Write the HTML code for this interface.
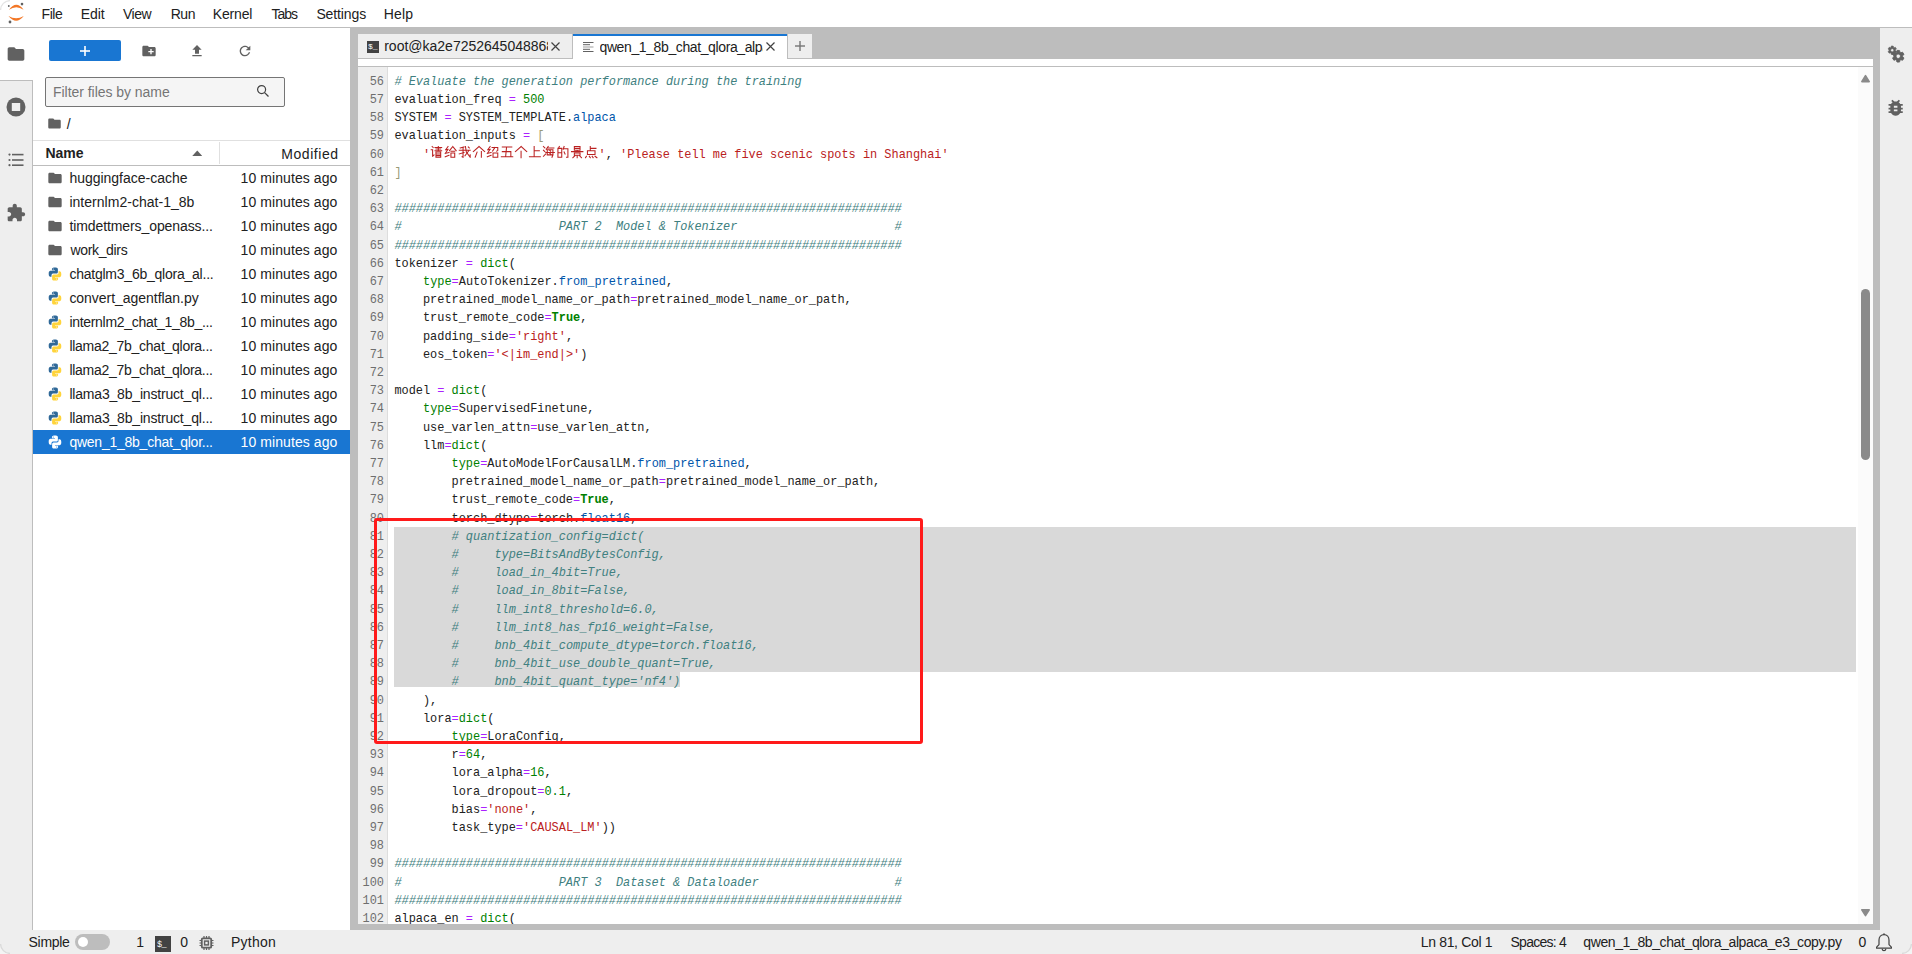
<!DOCTYPE html><html><head><meta charset="utf-8"><title>JupyterLab</title><style>

html,body{margin:0;padding:0;width:1912px;height:954px;overflow:hidden;background:#fff;font-family:"Liberation Sans",sans-serif;}
.abs{position:absolute;}
.code{position:absolute;left:394.400px;font-family:"Liberation Mono",monospace;font-size:11.9232px;line-height:18.20px;height:18.20px;white-space:pre;color:#212121;}
.gut{position:absolute;right:1489px;font-family:"Liberation Mono",monospace;font-size:11.9232px;line-height:18.20px;color:#6e6e6e;text-align:right;white-space:pre;}
.c{color:#408080;font-style:italic}
.k{color:#008000;font-weight:bold}
.b{color:#008000}
.o{color:#aa22ff}
.n{color:#008000}
.s{color:#ba2121}
.p{color:#0055aa}
.br{color:#999977}

</style></head><body>
<div class="abs" style="left:0;top:0;width:1912px;height:27px;background:#fff;border-bottom:1px solid #bdbdbd"></div>
<svg style="position:absolute;left:0.00px;top:0.00px;" width="32.00" height="27.00" viewBox="0 0 32 27"><path d="M9 9.8 Q16.3 -0.4 23.6 9.8 Q16.3 4.6 9 9.8Z" fill="#f37726"/><path d="M8.5 16 Q16.1 25.6 23.8 16 Q16.1 20.6 8.5 16Z" fill="#f37726"/><circle cx="22" cy="4.1" r="1.3" fill="#616161"/><circle cx="8.8" cy="6" r="0.9" fill="#616161"/><circle cx="10" cy="22" r="1.4" fill="#616161"/></svg>
<div style="position:absolute;left:41.60px;top:5.85px;font-size:14.00px;line-height:16.80px;color:#212121;font-weight:normal;white-space:nowrap;letter-spacing:-0.457px;">File</div>
<div style="position:absolute;left:80.80px;top:5.85px;font-size:14.00px;line-height:16.80px;color:#212121;font-weight:normal;white-space:nowrap;letter-spacing:-0.078px;">Edit</div>
<div style="position:absolute;left:123.10px;top:5.85px;font-size:14.00px;line-height:16.80px;color:#212121;font-weight:normal;white-space:nowrap;letter-spacing:-0.560px;">View</div>
<div style="position:absolute;left:170.70px;top:5.85px;font-size:14.00px;line-height:16.80px;color:#212121;font-weight:normal;white-space:nowrap;letter-spacing:-0.448px;">Run</div>
<div style="position:absolute;left:212.80px;top:5.85px;font-size:14.00px;line-height:16.80px;color:#212121;font-weight:normal;white-space:nowrap;letter-spacing:-0.172px;">Kernel</div>
<div style="position:absolute;left:271.60px;top:5.85px;font-size:14.00px;line-height:16.80px;color:#212121;font-weight:normal;white-space:nowrap;letter-spacing:-1.057px;">Tabs</div>
<div style="position:absolute;left:316.40px;top:5.85px;font-size:14.00px;line-height:16.80px;color:#212121;font-weight:normal;white-space:nowrap;letter-spacing:-0.112px;">Settings</div>
<div style="position:absolute;left:383.70px;top:5.85px;font-size:14.00px;line-height:16.80px;color:#212121;font-weight:normal;white-space:nowrap;letter-spacing:0.164px;">Help</div>
<div class="abs" style="left:0;top:28px;width:32px;height:902px;background:#eeeeee;border-right:1px solid #bdbdbd"></div>
<div class="abs" style="left:0;top:28px;width:33px;height:52px;background:#fff;border-bottom:1px solid #bdbdbd"></div>
<svg style="position:absolute;left:5.50px;top:43.50px;" width="20.00" height="20.00" viewBox="0 0 24 24"><path fill="#616161" d="M10 4H4c-1.1 0-1.99.9-1.99 2L2 18c0 1.1.9 2 2 2h16c1.1 0 2-.9 2-2V8c0-1.1-.9-2-2-2h-8l-2-2z"/></svg>
<svg style="position:absolute;left:6.00px;top:97.00px;" width="20.00" height="20.00" viewBox="0 0 20 20"><circle cx="10" cy="10" r="9.5" fill="#616161"/><rect x="5.8" y="6" width="8.4" height="8" fill="#eeeeee"/></svg>
<svg style="position:absolute;left:8.00px;top:152.00px;" width="16.00" height="16.00" viewBox="0 0 16 16"><circle cx="1.5" cy="2.6" r="1.1" fill="#616161"/><circle cx="1.5" cy="8" r="1.1" fill="#616161"/><circle cx="1.5" cy="13.2" r="1.1" fill="#616161"/><rect x="4" y="1.8" width="11.5" height="1.6" fill="#616161"/><rect x="4" y="7.2" width="11.5" height="1.6" fill="#616161"/><rect x="4" y="12.4" width="11.5" height="1.6" fill="#616161"/></svg>
<svg style="position:absolute;left:6.00px;top:202.50px;" width="20.00" height="20.00" viewBox="0 0 24 24"><path fill="#616161" d="M20.5 11H19V7c0-1.1-.9-2-2-2h-4V3.5C13 2.12 11.88 1 10.5 1S8 2.12 8 3.5V5H4c-1.1 0-1.99.9-1.99 2v3.8H3.5c1.49 0 2.7 1.210 2.7 2.7s-1.21 2.7-2.7 2.7H2V20c0 1.1.9 2 2 2h3.8v-1.5c0-1.49 1.21-2.7 2.7-2.7 1.49 0 2.7 1.21 2.7 2.7V22H17c1.1 0 2-.9 2-2v-4h1.5c1.38 0 2.5-1.12 2.5-2.5S21.88 11 20.5 11z"/></svg>
<div class="abs" style="left:33px;top:28px;width:317px;height:902px;background:#fff"></div>
<div class="abs" style="left:49px;top:40px;width:72px;height:21px;background:#1976d2;border-radius:2px"></div>
<svg style="position:absolute;left:79.00px;top:44.50px;" width="12.00" height="12.00" viewBox="0 0 12 12"><rect x="5.2" y="1" width="1.6" height="10" fill="#fff"/><rect x="1" y="5.2" width="10" height="1.6" fill="#fff"/></svg>
<svg style="position:absolute;left:141.00px;top:42.50px;" width="16.00" height="16.00" viewBox="0 0 24 24"><path fill="#616161" d="M20 6h-8l-2-2H4c-1.11 0-1.99.89-1.99 2L2 18c0 1.11.89 2 2 2h16c1.11 0 2-.89 2-2V8c0-1.11-.89-2-2-2zm-1 8h-3v3h-2v-3h-3v-2h3V9h2v3h3v2z"/></svg>
<svg style="position:absolute;left:189.00px;top:43.00px;" width="16.00" height="16.00" viewBox="0 0 24 24"><path fill="#616161" d="M9 16h6v-6h4l-7-7-7 7h4zm-4 2h14v2H5z"/></svg>
<svg style="position:absolute;left:237.00px;top:43.00px;" width="16.00" height="16.00" viewBox="0 0 24 24"><path fill="#616161" d="M17.65 6.35C16.2 4.9 14.21 4 12 4c-4.42 0-7.99 3.58-7.99 8s3.57 8 7.99 8c3.73 0 6.84-2.55 7.73-6h-2.08c-.82 2.33-3.04 4-5.65 4-3.31 0-6-2.69-6-6s2.69-6 6-6c1.66 0 3.14.69 4.22 1.78L13 11h7V4l-2.35 2.35z"/></svg>
<div class="abs" style="left:45px;top:77px;width:238px;height:28px;background:#f5f5f5;border:1px solid #757575;border-radius:2px"></div>
<div style="position:absolute;left:53.00px;top:84.05px;font-size:14.00px;line-height:16.80px;color:#757575;font-weight:normal;white-space:nowrap;letter-spacing:-0.037px;">Filter files by name</div>
<svg style="position:absolute;left:256.00px;top:84.00px;" width="14.00" height="14.00" viewBox="0 0 14 14"><circle cx="5.6" cy="5.6" r="4" stroke="#424242" stroke-width="1.2" fill="none"/><path d="M8.6 8.6 L12.5 12.5" stroke="#424242" stroke-width="1.3"/></svg>
<svg style="position:absolute;left:47.00px;top:116.00px;" width="15.00" height="15.00" viewBox="0 0 24 24"><path fill="#616161" d="M10 4H4c-1.1 0-1.99.9-1.99 2L2 18c0 1.1.9 2 2 2h16c1.1 0 2-.9 2-2V8c0-1.1-.9-2-2-2h-8l-2-2z"/></svg>
<div style="position:absolute;left:66.80px;top:116.05px;font-size:14.00px;line-height:16.80px;color:#212121;font-weight:normal;white-space:nowrap;letter-spacing:0.000px;">/</div>
<div class="abs" style="left:33px;top:140px;width:317px;height:24px;background:#fff;border-top:1px solid #e0e0e0;border-bottom:1px solid #bdbdbd"></div>
<div class="abs" style="left:219px;top:142px;width:1px;height:22px;background:#e0e0e0"></div>
<div style="position:absolute;left:45.50px;top:145.35px;font-size:14.00px;line-height:16.80px;color:#212121;font-weight:bold;white-space:nowrap;letter-spacing:-0.015px;">Name</div>
<svg style="position:absolute;left:191.50px;top:150.00px;" width="10.50" height="6.00" viewBox="0 0 10 6"><path d="M0 6 L5 0.5 L10 6Z" fill="#616161"/></svg>
<div style="position:absolute;left:281.30px;top:145.95px;font-size:14.00px;line-height:16.80px;color:#212121;font-weight:normal;white-space:nowrap;letter-spacing:0.553px;">Modified</div>
<svg style="position:absolute;left:47.00px;top:169.80px;" width="16.00" height="16.00" viewBox="0 0 24 24"><path fill="#616161" d="M10 4H4c-1.1 0-1.99.9-1.99 2L2 18c0 1.1.9 2 2 2h16c1.1 0 2-.9 2-2V8c0-1.1-.9-2-2-2h-8l-2-2z"/></svg>
<div style="position:absolute;left:69.40px;top:170.15px;font-size:14.00px;line-height:16.80px;color:#212121;font-weight:normal;white-space:nowrap;letter-spacing:-0.014px;">huggingface-cache</div>
<div style="position:absolute;left:240.50px;top:170.15px;font-size:14.00px;line-height:16.80px;color:#212121;font-weight:normal;white-space:nowrap;letter-spacing:0.089px;">10 minutes ago</div>
<svg style="position:absolute;left:47.00px;top:193.80px;" width="16.00" height="16.00" viewBox="0 0 24 24"><path fill="#616161" d="M10 4H4c-1.1 0-1.99.9-1.99 2L2 18c0 1.1.9 2 2 2h16c1.1 0 2-.9 2-2V8c0-1.1-.9-2-2-2h-8l-2-2z"/></svg>
<div style="position:absolute;left:69.40px;top:194.15px;font-size:14.00px;line-height:16.80px;color:#212121;font-weight:normal;white-space:nowrap;letter-spacing:0.026px;">internlm2-chat-1_8b</div>
<div style="position:absolute;left:240.50px;top:194.15px;font-size:14.00px;line-height:16.80px;color:#212121;font-weight:normal;white-space:nowrap;letter-spacing:0.089px;">10 minutes ago</div>
<svg style="position:absolute;left:47.00px;top:217.80px;" width="16.00" height="16.00" viewBox="0 0 24 24"><path fill="#616161" d="M10 4H4c-1.1 0-1.99.9-1.99 2L2 18c0 1.1.9 2 2 2h16c1.1 0 2-.9 2-2V8c0-1.1-.9-2-2-2h-8l-2-2z"/></svg>
<div style="position:absolute;left:69.40px;top:218.15px;font-size:14.00px;line-height:16.80px;color:#212121;font-weight:normal;white-space:nowrap;letter-spacing:-0.091px;">timdettmers_openass...</div>
<div style="position:absolute;left:240.50px;top:218.15px;font-size:14.00px;line-height:16.80px;color:#212121;font-weight:normal;white-space:nowrap;letter-spacing:0.089px;">10 minutes ago</div>
<svg style="position:absolute;left:47.00px;top:241.80px;" width="16.00" height="16.00" viewBox="0 0 24 24"><path fill="#616161" d="M10 4H4c-1.1 0-1.99.9-1.99 2L2 18c0 1.1.9 2 2 2h16c1.1 0 2-.9 2-2V8c0-1.1-.9-2-2-2h-8l-2-2z"/></svg>
<div style="position:absolute;left:70.40px;top:242.15px;font-size:14.00px;line-height:16.80px;color:#212121;font-weight:normal;white-space:nowrap;letter-spacing:-0.325px;">work_dirs</div>
<div style="position:absolute;left:240.50px;top:242.15px;font-size:14.00px;line-height:16.80px;color:#212121;font-weight:normal;white-space:nowrap;letter-spacing:0.089px;">10 minutes ago</div>
<svg style="position:absolute;left:48.00px;top:267.00px;" width="14.00" height="14.00" viewBox="0 0 16 16"><path fill="#306998" d="M7.9 0.5c-3.6 0-3.4 1.6-3.4 1.6v1.7h3.5v0.5H3.1S0.8 4 0.8 7.7s2 3.5 2 3.5h1.2V9.5s-0.1-2 2-2h3.4s1.9 0 1.9-1.9V2.4S11.6 0.5 7.9 0.5zM6 1.6c0.35 0 0.63 0.28 0.63 0.63S6.35 2.86 6 2.86 5.37 2.58 5.37 2.23 5.65 1.6 6 1.6z"/><path fill="#ffd43b" d="M8.1 15.5c3.6 0 3.4-1.6 3.4-1.6v-1.7H8v-0.5h4.9s2.3 0.3 2.3-3.4-2-3.5-2-3.5h-1.2v1.7s0.1 2-2 2H6.6s-1.9 0-1.9 1.9v3.2S4.4 15.5 8.1 15.5zM10 14.4c-0.35 0-0.63-0.28-0.63-0.63s0.28-0.63 0.63-0.63 0.63 0.28 0.63 0.63-0.28 0.63-0.63 0.63z"/></svg>
<div style="position:absolute;left:69.40px;top:266.15px;font-size:14.00px;line-height:16.80px;color:#212121;font-weight:normal;white-space:nowrap;letter-spacing:-0.234px;">chatglm3_6b_qlora_al...</div>
<div style="position:absolute;left:240.50px;top:266.15px;font-size:14.00px;line-height:16.80px;color:#212121;font-weight:normal;white-space:nowrap;letter-spacing:0.089px;">10 minutes ago</div>
<svg style="position:absolute;left:48.00px;top:291.00px;" width="14.00" height="14.00" viewBox="0 0 16 16"><path fill="#306998" d="M7.9 0.5c-3.6 0-3.4 1.6-3.4 1.6v1.7h3.5v0.5H3.1S0.8 4 0.8 7.7s2 3.5 2 3.5h1.2V9.5s-0.1-2 2-2h3.4s1.9 0 1.9-1.9V2.4S11.6 0.5 7.9 0.5zM6 1.6c0.35 0 0.63 0.28 0.63 0.63S6.35 2.86 6 2.86 5.37 2.58 5.37 2.23 5.65 1.6 6 1.6z"/><path fill="#ffd43b" d="M8.1 15.5c3.6 0 3.4-1.6 3.4-1.6v-1.7H8v-0.5h4.9s2.3 0.3 2.3-3.4-2-3.5-2-3.5h-1.2v1.7s0.1 2-2 2H6.6s-1.9 0-1.9 1.9v3.2S4.4 15.5 8.1 15.5zM10 14.4c-0.35 0-0.63-0.28-0.63-0.63s0.28-0.63 0.63-0.63 0.63 0.28 0.63 0.63-0.28 0.63-0.63 0.63z"/></svg>
<div style="position:absolute;left:69.40px;top:290.15px;font-size:14.00px;line-height:16.80px;color:#212121;font-weight:normal;white-space:nowrap;letter-spacing:-0.036px;">convert_agentflan.py</div>
<div style="position:absolute;left:240.50px;top:290.15px;font-size:14.00px;line-height:16.80px;color:#212121;font-weight:normal;white-space:nowrap;letter-spacing:0.089px;">10 minutes ago</div>
<svg style="position:absolute;left:48.00px;top:315.00px;" width="14.00" height="14.00" viewBox="0 0 16 16"><path fill="#306998" d="M7.9 0.5c-3.6 0-3.4 1.6-3.4 1.6v1.7h3.5v0.5H3.1S0.8 4 0.8 7.7s2 3.5 2 3.5h1.2V9.5s-0.1-2 2-2h3.4s1.9 0 1.9-1.9V2.4S11.6 0.5 7.9 0.5zM6 1.6c0.35 0 0.63 0.28 0.63 0.63S6.35 2.86 6 2.86 5.37 2.58 5.37 2.23 5.65 1.6 6 1.6z"/><path fill="#ffd43b" d="M8.1 15.5c3.6 0 3.4-1.6 3.4-1.6v-1.7H8v-0.5h4.9s2.3 0.3 2.3-3.4-2-3.5-2-3.5h-1.2v1.7s0.1 2-2 2H6.6s-1.9 0-1.9 1.9v3.2S4.4 15.5 8.1 15.5zM10 14.4c-0.35 0-0.63-0.28-0.63-0.63s0.28-0.63 0.63-0.63 0.63 0.28 0.63 0.63-0.28 0.63-0.63 0.63z"/></svg>
<div style="position:absolute;left:69.40px;top:314.15px;font-size:14.00px;line-height:16.80px;color:#212121;font-weight:normal;white-space:nowrap;letter-spacing:-0.301px;">internlm2_chat_1_8b_...</div>
<div style="position:absolute;left:240.50px;top:314.15px;font-size:14.00px;line-height:16.80px;color:#212121;font-weight:normal;white-space:nowrap;letter-spacing:0.089px;">10 minutes ago</div>
<svg style="position:absolute;left:48.00px;top:339.00px;" width="14.00" height="14.00" viewBox="0 0 16 16"><path fill="#306998" d="M7.9 0.5c-3.6 0-3.4 1.6-3.4 1.6v1.7h3.5v0.5H3.1S0.8 4 0.8 7.7s2 3.5 2 3.5h1.2V9.5s-0.1-2 2-2h3.4s1.9 0 1.9-1.9V2.4S11.6 0.5 7.9 0.5zM6 1.6c0.35 0 0.63 0.28 0.63 0.63S6.35 2.86 6 2.86 5.37 2.58 5.37 2.23 5.65 1.6 6 1.6z"/><path fill="#ffd43b" d="M8.1 15.5c3.6 0 3.4-1.6 3.4-1.6v-1.7H8v-0.5h4.9s2.3 0.3 2.3-3.4-2-3.5-2-3.5h-1.2v1.7s0.1 2-2 2H6.6s-1.9 0-1.9 1.9v3.2S4.4 15.5 8.1 15.5zM10 14.4c-0.35 0-0.63-0.28-0.63-0.63s0.28-0.63 0.63-0.63 0.63 0.28 0.63 0.63-0.28 0.63-0.63 0.63z"/></svg>
<div style="position:absolute;left:69.40px;top:338.15px;font-size:14.00px;line-height:16.80px;color:#212121;font-weight:normal;white-space:nowrap;letter-spacing:-0.266px;">llama2_7b_chat_qlora...</div>
<div style="position:absolute;left:240.50px;top:338.15px;font-size:14.00px;line-height:16.80px;color:#212121;font-weight:normal;white-space:nowrap;letter-spacing:0.089px;">10 minutes ago</div>
<svg style="position:absolute;left:48.00px;top:363.00px;" width="14.00" height="14.00" viewBox="0 0 16 16"><path fill="#306998" d="M7.9 0.5c-3.6 0-3.4 1.6-3.4 1.6v1.7h3.5v0.5H3.1S0.8 4 0.8 7.7s2 3.5 2 3.5h1.2V9.5s-0.1-2 2-2h3.4s1.9 0 1.9-1.9V2.4S11.6 0.5 7.9 0.5zM6 1.6c0.35 0 0.63 0.28 0.63 0.63S6.35 2.86 6 2.86 5.37 2.58 5.37 2.23 5.65 1.6 6 1.6z"/><path fill="#ffd43b" d="M8.1 15.5c3.6 0 3.4-1.6 3.4-1.6v-1.7H8v-0.5h4.9s2.3 0.3 2.3-3.4-2-3.5-2-3.5h-1.2v1.7s0.1 2-2 2H6.6s-1.9 0-1.9 1.9v3.2S4.4 15.5 8.1 15.5zM10 14.4c-0.35 0-0.63-0.28-0.63-0.63s0.28-0.63 0.63-0.63 0.63 0.28 0.63 0.63-0.28 0.63-0.63 0.63z"/></svg>
<div style="position:absolute;left:69.40px;top:362.15px;font-size:14.00px;line-height:16.80px;color:#212121;font-weight:normal;white-space:nowrap;letter-spacing:-0.266px;">llama2_7b_chat_qlora...</div>
<div style="position:absolute;left:240.50px;top:362.15px;font-size:14.00px;line-height:16.80px;color:#212121;font-weight:normal;white-space:nowrap;letter-spacing:0.089px;">10 minutes ago</div>
<svg style="position:absolute;left:48.00px;top:387.00px;" width="14.00" height="14.00" viewBox="0 0 16 16"><path fill="#306998" d="M7.9 0.5c-3.6 0-3.4 1.6-3.4 1.6v1.7h3.5v0.5H3.1S0.8 4 0.8 7.7s2 3.5 2 3.5h1.2V9.5s-0.1-2 2-2h3.4s1.9 0 1.9-1.9V2.4S11.6 0.5 7.9 0.5zM6 1.6c0.35 0 0.63 0.28 0.63 0.63S6.35 2.86 6 2.86 5.37 2.58 5.37 2.23 5.65 1.6 6 1.6z"/><path fill="#ffd43b" d="M8.1 15.5c3.6 0 3.4-1.6 3.4-1.6v-1.7H8v-0.5h4.9s2.3 0.3 2.3-3.4-2-3.5-2-3.5h-1.2v1.7s0.1 2-2 2H6.6s-1.9 0-1.9 1.9v3.2S4.4 15.5 8.1 15.5zM10 14.4c-0.35 0-0.63-0.28-0.63-0.63s0.28-0.63 0.63-0.63 0.63 0.28 0.63 0.63-0.28 0.63-0.63 0.63z"/></svg>
<div style="position:absolute;left:69.40px;top:386.15px;font-size:14.00px;line-height:16.80px;color:#212121;font-weight:normal;white-space:nowrap;letter-spacing:-0.186px;">llama3_8b_instruct_ql...</div>
<div style="position:absolute;left:240.50px;top:386.15px;font-size:14.00px;line-height:16.80px;color:#212121;font-weight:normal;white-space:nowrap;letter-spacing:0.089px;">10 minutes ago</div>
<svg style="position:absolute;left:48.00px;top:411.00px;" width="14.00" height="14.00" viewBox="0 0 16 16"><path fill="#306998" d="M7.9 0.5c-3.6 0-3.4 1.6-3.4 1.6v1.7h3.5v0.5H3.1S0.8 4 0.8 7.7s2 3.5 2 3.5h1.2V9.5s-0.1-2 2-2h3.4s1.9 0 1.9-1.9V2.4S11.6 0.5 7.9 0.5zM6 1.6c0.35 0 0.63 0.28 0.63 0.63S6.35 2.86 6 2.86 5.37 2.58 5.37 2.23 5.65 1.6 6 1.6z"/><path fill="#ffd43b" d="M8.1 15.5c3.6 0 3.4-1.6 3.4-1.6v-1.7H8v-0.5h4.9s2.3 0.3 2.3-3.4-2-3.5-2-3.5h-1.2v1.7s0.1 2-2 2H6.6s-1.9 0-1.9 1.9v3.2S4.4 15.5 8.1 15.5zM10 14.4c-0.35 0-0.63-0.28-0.63-0.63s0.28-0.63 0.63-0.63 0.63 0.28 0.63 0.63-0.28 0.63-0.63 0.63z"/></svg>
<div style="position:absolute;left:69.40px;top:410.15px;font-size:14.00px;line-height:16.80px;color:#212121;font-weight:normal;white-space:nowrap;letter-spacing:-0.186px;">llama3_8b_instruct_ql...</div>
<div style="position:absolute;left:240.50px;top:410.15px;font-size:14.00px;line-height:16.80px;color:#212121;font-weight:normal;white-space:nowrap;letter-spacing:0.089px;">10 minutes ago</div>
<div class="abs" style="left:33px;top:430px;width:317px;height:24px;background:#1976d2"></div>
<svg style="position:absolute;left:48.00px;top:435.00px;" width="14.00" height="14.00" viewBox="0 0 16 16"><path fill="#ffffff" d="M7.9 0.5c-3.6 0-3.4 1.6-3.4 1.6v1.7h3.5v0.5H3.1S0.8 4 0.8 7.7s2 3.5 2 3.5h1.2V9.5s-0.1-2 2-2h3.4s1.9 0 1.9-1.9V2.4S11.6 0.5 7.9 0.5zM6 1.6c0.35 0 0.63 0.28 0.63 0.63S6.35 2.86 6 2.86 5.37 2.58 5.37 2.23 5.65 1.6 6 1.6z"/><path fill="#ffffff" d="M8.1 15.5c3.6 0 3.4-1.6 3.4-1.6v-1.7H8v-0.5h4.9s2.3 0.3 2.3-3.4-2-3.5-2-3.5h-1.2v1.7s0.1 2-2 2H6.6s-1.9 0-1.9 1.9v3.2S4.4 15.5 8.1 15.5zM10 14.4c-0.35 0-0.63-0.28-0.63-0.63s0.28-0.63 0.63-0.63 0.63 0.28 0.63 0.63-0.28 0.63-0.63 0.63z"/></svg>
<div style="position:absolute;left:69.40px;top:434.15px;font-size:14.00px;line-height:16.80px;color:#fff;font-weight:normal;white-space:nowrap;letter-spacing:-0.242px;">qwen_1_8b_chat_qlor...</div>
<div style="position:absolute;left:240.50px;top:434.15px;font-size:14.00px;line-height:16.80px;color:#fff;font-weight:normal;white-space:nowrap;letter-spacing:0.089px;">10 minutes ago</div>
<div class="abs" style="left:350px;top:28px;width:1530px;height:902px;background:#bdbdbd"></div>
<div class="abs" style="left:358px;top:58px;width:1515px;height:1px;background:#bdbdbd"></div>
<div class="abs" style="left:358px;top:33px;width:214px;height:24px;background:#eeeeee;border:1px solid #bdbdbd;border-bottom:none;border-left:none"></div>
<div class="abs" style="left:367px;top:41px;width:12px;height:12px;background:#424242"></div>
<div class="abs" style="left:368px;top:41px;font-family:'Liberation Mono',monospace;font-size:8px;line-height:12px;color:#fff;white-space:pre">$_</div>
<div class="abs" style="left:384px;top:34px;width:164px;height:24px;overflow:hidden"><div style="position:absolute;left:0.20px;top:4.25px;font-size:14.00px;line-height:16.80px;color:#212121;font-weight:normal;white-space:nowrap;letter-spacing:0.000px;">root@ka2e725264504886858</div></div>
<svg style="position:absolute;left:551.00px;top:42.10px;" width="9.00" height="9.00" viewBox="0 0 9 9"><path d="M0.5 0.5 L8.5 8.5 M8.5 0.5 L0.5 8.5" stroke="#424242" stroke-width="1.2"/></svg>
<div class="abs" style="left:573px;top:34px;width:214px;height:25px;background:#fff"></div>
<div class="abs" style="left:573px;top:34px;width:214px;height:2px;background:#1976d2"></div>
<svg style="position:absolute;left:582.50px;top:42.00px;" width="11.00" height="10.00" viewBox="0 0 11 10"><rect x="0" y="0" width="10.5" height="1" fill="#616161"/><rect x="0" y="2.2" width="7" height="1" fill="#616161"/><rect x="0" y="4.5" width="10.5" height="1" fill="#9e9e9e"/><rect x="0" y="6.8" width="7" height="1" fill="#616161"/><rect x="0" y="9" width="10.5" height="1" fill="#616161"/></svg>
<div class="abs" style="left:599.5px;top:34px;width:163.8px;height:24px;overflow:hidden"><div style="position:absolute;left:0.00px;top:4.55px;font-size:14.00px;line-height:16.80px;color:#212121;font-weight:normal;white-space:nowrap;letter-spacing:-0.388px;">qwen_1_8b_chat_qlora_alpaca_e3_copy.py</div></div>
<svg style="position:absolute;left:766.00px;top:42.10px;" width="9.00" height="9.00" viewBox="0 0 9 9"><path d="M0.5 0.5 L8.5 8.5 M8.5 0.5 L0.5 8.5" stroke="#424242" stroke-width="1.2"/></svg>
<div class="abs" style="left:787px;top:34px;width:24px;height:24px;background:#eeeeee;border-left:1px solid #bdbdbd;border-bottom:1px solid #bdbdbd"></div>
<svg style="position:absolute;left:795.00px;top:41.00px;" width="10.00" height="10.00" viewBox="0 0 10 10"><rect x="4.3" y="0" width="1.4" height="10" fill="#757575"/><rect x="0" y="4.3" width="10" height="1.4" fill="#757575"/></svg>
<div class="abs" style="left:358px;top:59px;width:1515px;height:7px;background:#fff;border-bottom:1px solid #bdbdbd"></div>
<div class="abs" style="left:358px;top:67px;width:1515px;height:857px;background:#fff;overflow:hidden">
<div class="abs" style="left:0;top:0;width:29px;height:857px;background:#eeeeee;border-right:1px solid #dddddd"></div>
<div class="abs" style="left:1500px;top:0;width:15px;height:857px;background:#fbfbfb"></div>
</div>
<div class="abs" style="left:394px;top:527.1px;width:1462px;height:144.6px;background:#d9d9d9"></div>
<div class="abs" style="left:394px;top:671.7px;width:286.20px;height:15.1px;background:#d9d9d9"></div>
<div class="abs" style="left:0;top:67px;width:1873px;height:857px;overflow:hidden">
<div class="gut" style="top:5.70px">56</div>
<div class="code" style="top:5.70px"><span class="c"># Evaluate the generation performance during the training</span></div>
<div class="gut" style="top:23.90px">57</div>
<div class="code" style="top:23.90px">evaluation_freq <span class="o">=</span> <span class="n">500</span></div>
<div class="gut" style="top:42.10px">58</div>
<div class="code" style="top:42.10px">SYSTEM <span class="o">=</span> SYSTEM_TEMPLATE.<span class="p">alpaca</span></div>
<div class="gut" style="top:60.30px">59</div>
<div class="code" style="top:60.30px">evaluation_inputs <span class="o">=</span> <span class="br">[</span></div>
<div class="gut" style="top:78.50px">60</div>
<div class="code" style="top:78.50px">    <span class="s">'</span><span style="display:inline-block;position:relative;width:168.4px;height:1px;vertical-align:baseline"><svg width="168.4" height="16" style="position:absolute;left:0;top:-11.5px" viewBox="0 0 168.4 16"><path d="M2.15 1.50L3.10 2.43M1.20 4.76L2.62 4.76M2.62 4.76L2.62 11.27M2.62 11.27L4.05 9.87M5.00 2.43L11.65 2.43M8.32 1.50L8.32 5.69M5.95 4.01L10.70 4.01M5.00 5.69L11.65 5.69M5.95 7.08L10.70 7.08M10.70 7.08L10.70 12.20M10.70 12.20L5.95 12.20M5.95 12.20L5.95 7.08M5.95 8.94L10.70 8.94M5.95 10.61L10.70 10.61M18.08 1.50L15.70 4.76M15.70 4.76L18.08 4.29M18.08 4.29L15.23 8.48M15.23 8.48L19.03 7.54M15.23 11.73L19.03 10.34M22.83 1.50L19.50 5.69M22.83 1.50L26.15 5.69M20.93 6.15L24.73 6.15M20.93 8.01L24.73 8.01M24.73 8.01L24.73 12.20M24.73 12.20L20.93 12.20M20.93 12.20L20.93 8.01M34.01 1.97L30.21 2.90M29.26 5.22L40.18 5.22M33.06 2.43L33.06 12.20M33.06 12.20L32.11 11.73M29.26 8.94L34.01 7.54M35.43 1.50L36.38 7.08M36.38 7.08L40.18 12.20M40.18 12.20L40.18 9.87M34.96 10.80L38.76 5.69M38.28 1.97L39.23 2.90M48.99 1.50L43.29 6.62M48.99 1.50L54.69 6.62M47.09 7.08L45.19 12.20M51.36 6.62L51.36 12.20M60.17 1.50L57.80 4.76M57.80 4.76L60.17 4.29M60.17 4.29L57.32 8.48M57.32 8.48L61.12 7.54M57.32 11.73L61.12 10.34M62.07 2.43L67.77 2.43M67.77 2.43L67.77 5.22M67.77 5.22L66.82 6.15M64.92 2.43L62.55 6.15M63.02 8.01L67.77 8.01M67.77 8.01L67.77 12.20M67.77 12.20L63.02 12.20M63.02 12.20L63.02 8.01M72.30 1.97L81.80 1.97M76.57 1.97L75.62 11.73M72.30 6.62L80.85 6.62M80.85 6.62L80.85 11.73M71.35 11.73L82.75 11.73M91.08 1.50L85.38 6.62M91.08 1.50L96.78 6.62M91.08 6.15L91.08 12.66M104.16 1.50L104.16 11.73M104.16 5.69L109.38 5.69M99.41 11.73L110.33 11.73M113.44 1.50L114.86 2.90M113.44 5.22L114.86 6.62M113.44 11.27L115.81 8.94M118.19 1.50L116.29 4.29M117.24 2.90L123.89 2.90M117.24 4.76L122.94 4.76M122.94 4.76L122.94 9.87M122.94 9.87L117.24 9.87M117.24 9.87L117.24 4.76M115.81 7.54L124.36 7.54M119.61 5.22L120.56 6.15M119.61 8.01L120.56 8.94M122.94 9.87L121.99 12.20M129.37 1.50L128.42 3.36M127.94 3.36L131.75 3.36M131.75 3.36L131.75 12.20M131.75 12.20L127.94 12.20M127.94 12.20L127.94 3.36M127.94 7.82L131.75 7.82M134.12 1.50L133.17 4.29M133.17 3.83L137.92 3.83M137.92 3.83L137.92 12.20M137.92 12.20L136.50 12.20M134.12 7.08L135.07 8.94M144.35 1.50L150.05 1.50M150.05 1.50L150.05 5.22M150.05 5.22L144.35 5.22M144.35 5.22L144.35 1.50M144.35 3.36L150.05 3.36M141.50 6.62L152.90 6.62M147.20 5.69L147.20 6.62M144.35 8.01L150.05 8.01M150.05 8.01L150.05 10.34M150.05 10.34L144.35 10.34M144.35 10.34L144.35 8.01M147.20 10.34L147.20 12.66M144.82 10.80L142.92 12.66M149.57 10.80L151.47 12.66M160.28 1.50L160.28 5.22M160.28 3.36L165.98 3.36M157.43 5.69L165.03 5.69M165.03 5.69L165.03 9.41M165.03 9.41L157.43 9.41M157.43 9.41L157.43 5.69M156.48 11.27L155.53 12.66M159.33 11.27L160.28 12.66M162.18 11.27L163.13 12.66M165.03 11.27L166.93 12.66" stroke="#ba2121" stroke-width="1.05" fill="none" stroke-linecap="square"/></svg></span><span class="s">'</span>, <span class="s">'Please tell me five scenic spots in Shanghai'</span></div>
<div class="gut" style="top:96.70px">61</div>
<div class="code" style="top:96.70px"><span class="br">]</span></div>
<div class="gut" style="top:114.90px">62</div>
<div class="code" style="top:114.90px"></div>
<div class="gut" style="top:133.10px">63</div>
<div class="code" style="top:133.10px"><span class="c">#######################################################################</span></div>
<div class="gut" style="top:151.30px">64</div>
<div class="code" style="top:151.30px"><span class="c">#                      PART 2  Model &amp; Tokenizer                      #</span></div>
<div class="gut" style="top:169.50px">65</div>
<div class="code" style="top:169.50px"><span class="c">#######################################################################</span></div>
<div class="gut" style="top:187.70px">66</div>
<div class="code" style="top:187.70px">tokenizer <span class="o">=</span> <span class="b">dict</span>(</div>
<div class="gut" style="top:205.90px">67</div>
<div class="code" style="top:205.90px">    <span class="b">type</span><span class="o">=</span>AutoTokenizer.<span class="p">from_pretrained</span>,</div>
<div class="gut" style="top:224.10px">68</div>
<div class="code" style="top:224.10px">    pretrained_model_name_or_path<span class="o">=</span>pretrained_model_name_or_path,</div>
<div class="gut" style="top:242.30px">69</div>
<div class="code" style="top:242.30px">    trust_remote_code<span class="o">=</span><span class="k">True</span>,</div>
<div class="gut" style="top:260.50px">70</div>
<div class="code" style="top:260.50px">    padding_side<span class="o">=</span><span class="s">&#x27;right&#x27;</span>,</div>
<div class="gut" style="top:278.70px">71</div>
<div class="code" style="top:278.70px">    eos_token<span class="o">=</span><span class="s">&#x27;&lt;|im_end|&gt;&#x27;</span>)</div>
<div class="gut" style="top:296.90px">72</div>
<div class="code" style="top:296.90px"></div>
<div class="gut" style="top:315.10px">73</div>
<div class="code" style="top:315.10px">model <span class="o">=</span> <span class="b">dict</span>(</div>
<div class="gut" style="top:333.30px">74</div>
<div class="code" style="top:333.30px">    <span class="b">type</span><span class="o">=</span>SupervisedFinetune,</div>
<div class="gut" style="top:351.50px">75</div>
<div class="code" style="top:351.50px">    use_varlen_attn<span class="o">=</span>use_varlen_attn,</div>
<div class="gut" style="top:369.70px">76</div>
<div class="code" style="top:369.70px">    llm<span class="o">=</span><span class="b">dict</span>(</div>
<div class="gut" style="top:387.90px">77</div>
<div class="code" style="top:387.90px">        <span class="b">type</span><span class="o">=</span>AutoModelForCausalLM.<span class="p">from_pretrained</span>,</div>
<div class="gut" style="top:406.10px">78</div>
<div class="code" style="top:406.10px">        pretrained_model_name_or_path<span class="o">=</span>pretrained_model_name_or_path,</div>
<div class="gut" style="top:424.30px">79</div>
<div class="code" style="top:424.30px">        trust_remote_code<span class="o">=</span><span class="k">True</span>,</div>
<div class="gut" style="top:442.50px">80</div>
<div class="code" style="top:442.50px">        torch_dtype<span class="o">=</span>torch.<span class="p">float16</span>,</div>
<div class="gut" style="top:460.70px">81</div>
<div class="code" style="top:460.70px">        <span class="c"># quantization_config=dict(</span></div>
<div class="gut" style="top:478.90px">82</div>
<div class="code" style="top:478.90px">        <span class="c">#     type=BitsAndBytesConfig,</span></div>
<div class="gut" style="top:497.10px">83</div>
<div class="code" style="top:497.10px">        <span class="c">#     load_in_4bit=True,</span></div>
<div class="gut" style="top:515.30px">84</div>
<div class="code" style="top:515.30px">        <span class="c">#     load_in_8bit=False,</span></div>
<div class="gut" style="top:533.50px">85</div>
<div class="code" style="top:533.50px">        <span class="c">#     llm_int8_threshold=6.0,</span></div>
<div class="gut" style="top:551.70px">86</div>
<div class="code" style="top:551.70px">        <span class="c">#     llm_int8_has_fp16_weight=False,</span></div>
<div class="gut" style="top:569.90px">87</div>
<div class="code" style="top:569.90px">        <span class="c">#     bnb_4bit_compute_dtype=torch.float16,</span></div>
<div class="gut" style="top:588.10px">88</div>
<div class="code" style="top:588.10px">        <span class="c">#     bnb_4bit_use_double_quant=True,</span></div>
<div class="gut" style="top:606.30px">89</div>
<div class="code" style="top:606.30px">        <span class="c">#     bnb_4bit_quant_type=&#x27;nf4&#x27;)</span></div>
<div class="gut" style="top:624.50px">90</div>
<div class="code" style="top:624.50px">    ),</div>
<div class="gut" style="top:642.70px">91</div>
<div class="code" style="top:642.70px">    lora<span class="o">=</span><span class="b">dict</span>(</div>
<div class="gut" style="top:660.90px">92</div>
<div class="code" style="top:660.90px">        <span class="b">type</span><span class="o">=</span>LoraConfig,</div>
<div class="gut" style="top:679.10px">93</div>
<div class="code" style="top:679.10px">        r<span class="o">=</span><span class="n">64</span>,</div>
<div class="gut" style="top:697.30px">94</div>
<div class="code" style="top:697.30px">        lora_alpha<span class="o">=</span><span class="n">16</span>,</div>
<div class="gut" style="top:715.50px">95</div>
<div class="code" style="top:715.50px">        lora_dropout<span class="o">=</span><span class="n">0.1</span>,</div>
<div class="gut" style="top:733.70px">96</div>
<div class="code" style="top:733.70px">        bias<span class="o">=</span><span class="s">&#x27;none&#x27;</span>,</div>
<div class="gut" style="top:751.90px">97</div>
<div class="code" style="top:751.90px">        task_type<span class="o">=</span><span class="s">&#x27;CAUSAL_LM&#x27;</span>))</div>
<div class="gut" style="top:770.10px">98</div>
<div class="code" style="top:770.10px"></div>
<div class="gut" style="top:788.30px">99</div>
<div class="code" style="top:788.30px"><span class="c">#######################################################################</span></div>
<div class="gut" style="top:806.50px">100</div>
<div class="code" style="top:806.50px"><span class="c">#                      PART 3  Dataset &amp; Dataloader                   #</span></div>
<div class="gut" style="top:824.70px">101</div>
<div class="code" style="top:824.70px"><span class="c">#######################################################################</span></div>
<div class="gut" style="top:842.90px">102</div>
<div class="code" style="top:842.90px">alpaca_en <span class="o">=</span> <span class="b">dict</span>(</div>
</div>
<svg style="position:absolute;left:1860.00px;top:74.00px;" width="11.00" height="9.00" viewBox="0 0 11 9"><path d="M1.8 7.6 L5.5 1.6 L9.2 7.6Z" fill="#8a8a8a" stroke="#8a8a8a" stroke-width="1.6" stroke-linejoin="round"/></svg>
<div class="abs" style="left:1861px;top:289px;width:9px;height:171px;background:#8a8a8a;border-radius:4.5px"></div>
<svg style="position:absolute;left:1860.00px;top:908.00px;" width="11.00" height="9.00" viewBox="0 0 11 9"><path d="M1.8 1.8 L5.5 7.6 L9.2 1.8Z" fill="#8a8a8a" stroke="#8a8a8a" stroke-width="1.6" stroke-linejoin="round"/></svg>
<div class="abs" style="left:1880px;top:28px;width:32px;height:902px;background:#eeeeee"></div>
<svg style="position:absolute;left:1886.60px;top:44.50px;" width="10.50" height="10.50" viewBox="0 0 24 24"><path fill="#616161" stroke="#616161" stroke-width="1.5" d="M19.14 12.94c.04-.3.06-.61.06-.94 0-.32-.02-.64-.07-.94l2.03-1.58c.18-.14.23-.41.12-.61l-1.92-3.32c-.12-.22-.37-.29-.59-.22l-2.39.96c-.5-.38-1.03-.7-1.62-.94l-.36-2.54c-.04-.24-.24-.41-.48-.41h-3.84c-.24 0-.43.17-.47.41l-.36 2.54c-.59.24-1.13.57-1.62.94l-2.39-.96c-.22-.08-.47 0-.59.22L2.74 8.87c-.12.21-.08.47.12.61l2.03 1.58c-.05.3-.09.63-.09.94s.02.64.07.94l-2.03 1.58c-.18.14-.23.41-.12.61l1.920 3.32c.12.22.37.29.59.22l2.39-.96c.5.38 1.03.7 1.62.94l.36 2.54c.05.24.24.41.48.41h3.84c.24 0 .44-.17.47-.41l.36-2.54c.59-.24 1.13-.56 1.62-.94l2.39.96c.22.08.47 0 .59-.22l1.92-3.32c.12-.22.07-.47-.12-.61l-2.01-1.58zM12 15.6c-1.98 0-3.6-1.62-3.6-3.6s1.62-3.6 3.6-3.6 3.6 1.62 3.6 3.6-1.62 3.6-3.6 3.6z"/></svg>
<svg style="position:absolute;left:1891.00px;top:49.00px;" width="14.50" height="14.50" viewBox="0 0 24 24"><path fill="#616161" stroke="#616161" stroke-width="1.5" d="M19.14 12.94c.04-.3.06-.61.06-.94 0-.32-.02-.64-.07-.94l2.03-1.58c.18-.14.23-.41.12-.61l-1.92-3.32c-.12-.22-.37-.29-.59-.22l-2.39.96c-.5-.38-1.03-.7-1.62-.94l-.36-2.54c-.04-.24-.24-.41-.48-.41h-3.84c-.24 0-.43.17-.47.41l-.36 2.54c-.59.24-1.13.57-1.62.94l-2.39-.96c-.22-.08-.47 0-.59.22L2.74 8.87c-.12.21-.08.47.12.61l2.03 1.58c-.05.3-.09.63-.09.94s.02.64.07.94l-2.03 1.58c-.18.14-.23.41-.12.61l1.920 3.32c.12.22.37.29.59.22l2.39-.96c.5.38 1.03.7 1.62.94l.36 2.54c.05.24.24.41.48.41h3.84c.24 0 .44-.17.47-.41l.36-2.54c.59-.24 1.13-.56 1.62-.94l2.39.96c.22.08.47 0 .59-.22l1.92-3.32c.12-.22.07-.47-.12-.61l-2.01-1.58zM12 15.6c-1.98 0-3.6-1.62-3.6-3.6s1.62-3.6 3.6-3.6 3.6 1.62 3.6 3.6-1.62 3.6-3.6 3.6z"/></svg>
<svg style="position:absolute;left:1885.00px;top:96.50px;" width="21.30" height="21.30" viewBox="0 0 24 24"><path fill="#616161" d="M20 8h-2.81c-.45-.78-1.07-1.45-1.82-1.96L17 4.41 15.59 3l-2.17 2.17C12.96 5.060 12.49 5 12 5c-.49 0-.96.06-1.41.17L8.41 3 7 4.41l1.62 1.63C7.88 6.55 7.26 7.22 6.81 8H4v2h2.09c-.05.33-.09.66-.09 1v1H4v2h2v1c0 .34.04.67.09 1H4v2h2.81c1.04 1.79 2.97 3 5.19 3s4.15-1.21 5.19-3H20v-2h-2.09c.05-.33.09-.66.09-1v-1h2v-2h-2v-1c0-.34-.04-.67-.09-1H20V8zm-6 8h-4v-2h4v2zm0-4h-4v-2h4v2z"/></svg>
<div class="abs" style="left:0;top:930px;width:1912px;height:24px;background:#eeeeee"></div>
<div style="position:absolute;left:28.50px;top:933.55px;font-size:14.00px;line-height:16.80px;color:#212121;font-weight:normal;white-space:nowrap;letter-spacing:-0.281px;">Simple</div>
<div class="abs" style="left:75px;top:934px;width:35px;height:15.6px;background:#bdbdbd;border-radius:8px"></div>
<div class="abs" style="left:77.8px;top:936.8px;width:10.2px;height:10.2px;background:#fff;border-radius:50%"></div>
<div style="position:absolute;left:136.20px;top:933.55px;font-size:14.00px;line-height:16.80px;color:#212121;font-weight:normal;white-space:nowrap;letter-spacing:0.000px;">1</div>
<div class="abs" style="left:155px;top:936px;width:15.6px;height:15.6px;background:#424242"></div>
<div class="abs" style="left:157px;top:937.5px;font-family:'Liberation Mono',monospace;font-size:8.5px;line-height:15px;color:#fff;white-space:pre;letter-spacing:-0.6px">$_</div>
<div style="position:absolute;left:180.30px;top:933.55px;font-size:14.00px;line-height:16.80px;color:#212121;font-weight:normal;white-space:nowrap;letter-spacing:0.000px;">0</div>
<svg style="position:absolute;left:198.50px;top:936.00px;" width="15.00" height="14.00" viewBox="0 0 15 14"><rect x="2.8" y="2.3" width="9.4" height="9.4" rx="1" stroke="#616161" stroke-width="1.8" fill="none"/><rect x="5.6" y="5.1" width="3.8" height="3.8" stroke="#616161" stroke-width="1.5" fill="none"/><path d="M5 0v2M7.5 0v2M10 0v2M5 12v2M7.5 12v2M10 12v2M0.5 4.5h2M0.5 7h2M0.5 9.5h2M12.5 4.5h2M12.5 7h2M12.5 9.5h2" stroke="#616161" stroke-width="1.2"/></svg>
<div style="position:absolute;left:230.90px;top:933.55px;font-size:14.00px;line-height:16.80px;color:#212121;font-weight:normal;white-space:nowrap;letter-spacing:0.260px;">Python</div>
<div style="position:absolute;left:1420.80px;top:933.55px;font-size:14.00px;line-height:16.80px;color:#212121;font-weight:normal;white-space:nowrap;letter-spacing:-0.346px;">Ln 81, Col 1</div>
<div style="position:absolute;left:1510.50px;top:933.55px;font-size:14.00px;line-height:16.80px;color:#212121;font-weight:normal;white-space:nowrap;letter-spacing:-0.747px;">Spaces: 4</div>
<div style="position:absolute;left:1583.30px;top:933.55px;font-size:14.00px;line-height:16.80px;color:#212121;font-weight:normal;white-space:nowrap;letter-spacing:-0.388px;">qwen_1_8b_chat_qlora_alpaca_e3_copy.py</div>
<div style="position:absolute;left:1858.40px;top:933.55px;font-size:14.00px;line-height:16.80px;color:#212121;font-weight:normal;white-space:nowrap;letter-spacing:0.000px;">0</div>
<svg style="position:absolute;left:1875.00px;top:933.00px;" width="18.00" height="19.00" viewBox="0 0 18 19"><path d="M9 1.6c-3 0-5 2.4-5 5.4v4.6L1.6 14.2v1h14.8v-1L14 11.6V7c0-3-2-5.4-5-5.4z" stroke="#424242" stroke-width="1.2" fill="none" stroke-linejoin="round"/><path d="M7.1 15.8c0.2 1.2 0.9 1.8 1.9 1.8s1.7-0.6 1.9-1.8" stroke="#424242" stroke-width="1.2" fill="none"/><rect x="8.4" y="0.3" width="1.2" height="1.6" fill="#424242"/></svg>
<div class="abs" style="left:374.2px;top:518.3px;width:543px;height:219.5px;border:3.2px solid #ff1a1a;border-radius:3px"></div>
<svg style="position:absolute;left:0.00px;top:0.00px;" width="12.00" height="12.00" viewBox="0 0 12 12"><path d="M0.6 10 A9.4 9.4 0 0 1 10 0.6" stroke="#e4e4e4" stroke-width="1.3" fill="none"/></svg>
<svg style="position:absolute;left:0.00px;top:942.00px;" width="12.00" height="12.00" viewBox="0 0 12 12"><path d="M0 12 L0 2 A9.4 9.4 0 0 0 10 11.4 L10 12Z" fill="#f4f4f4"/><path d="M0.6 2 A9.4 9.4 0 0 0 10 11.4" stroke="#dadada" stroke-width="1.3" fill="none"/></svg>
<svg style="position:absolute;left:1900.00px;top:942.00px;" width="12.00" height="12.00" viewBox="0 0 12 12"><path d="M12 12 L12 2 A9.4 9.4 0 0 1 2 11.4 L2 12Z" fill="#f4f4f4"/><path d="M11.4 2 A9.4 9.4 0 0 1 2 11.4" stroke="#dadada" stroke-width="1.3" fill="none"/></svg>
</body></html>
